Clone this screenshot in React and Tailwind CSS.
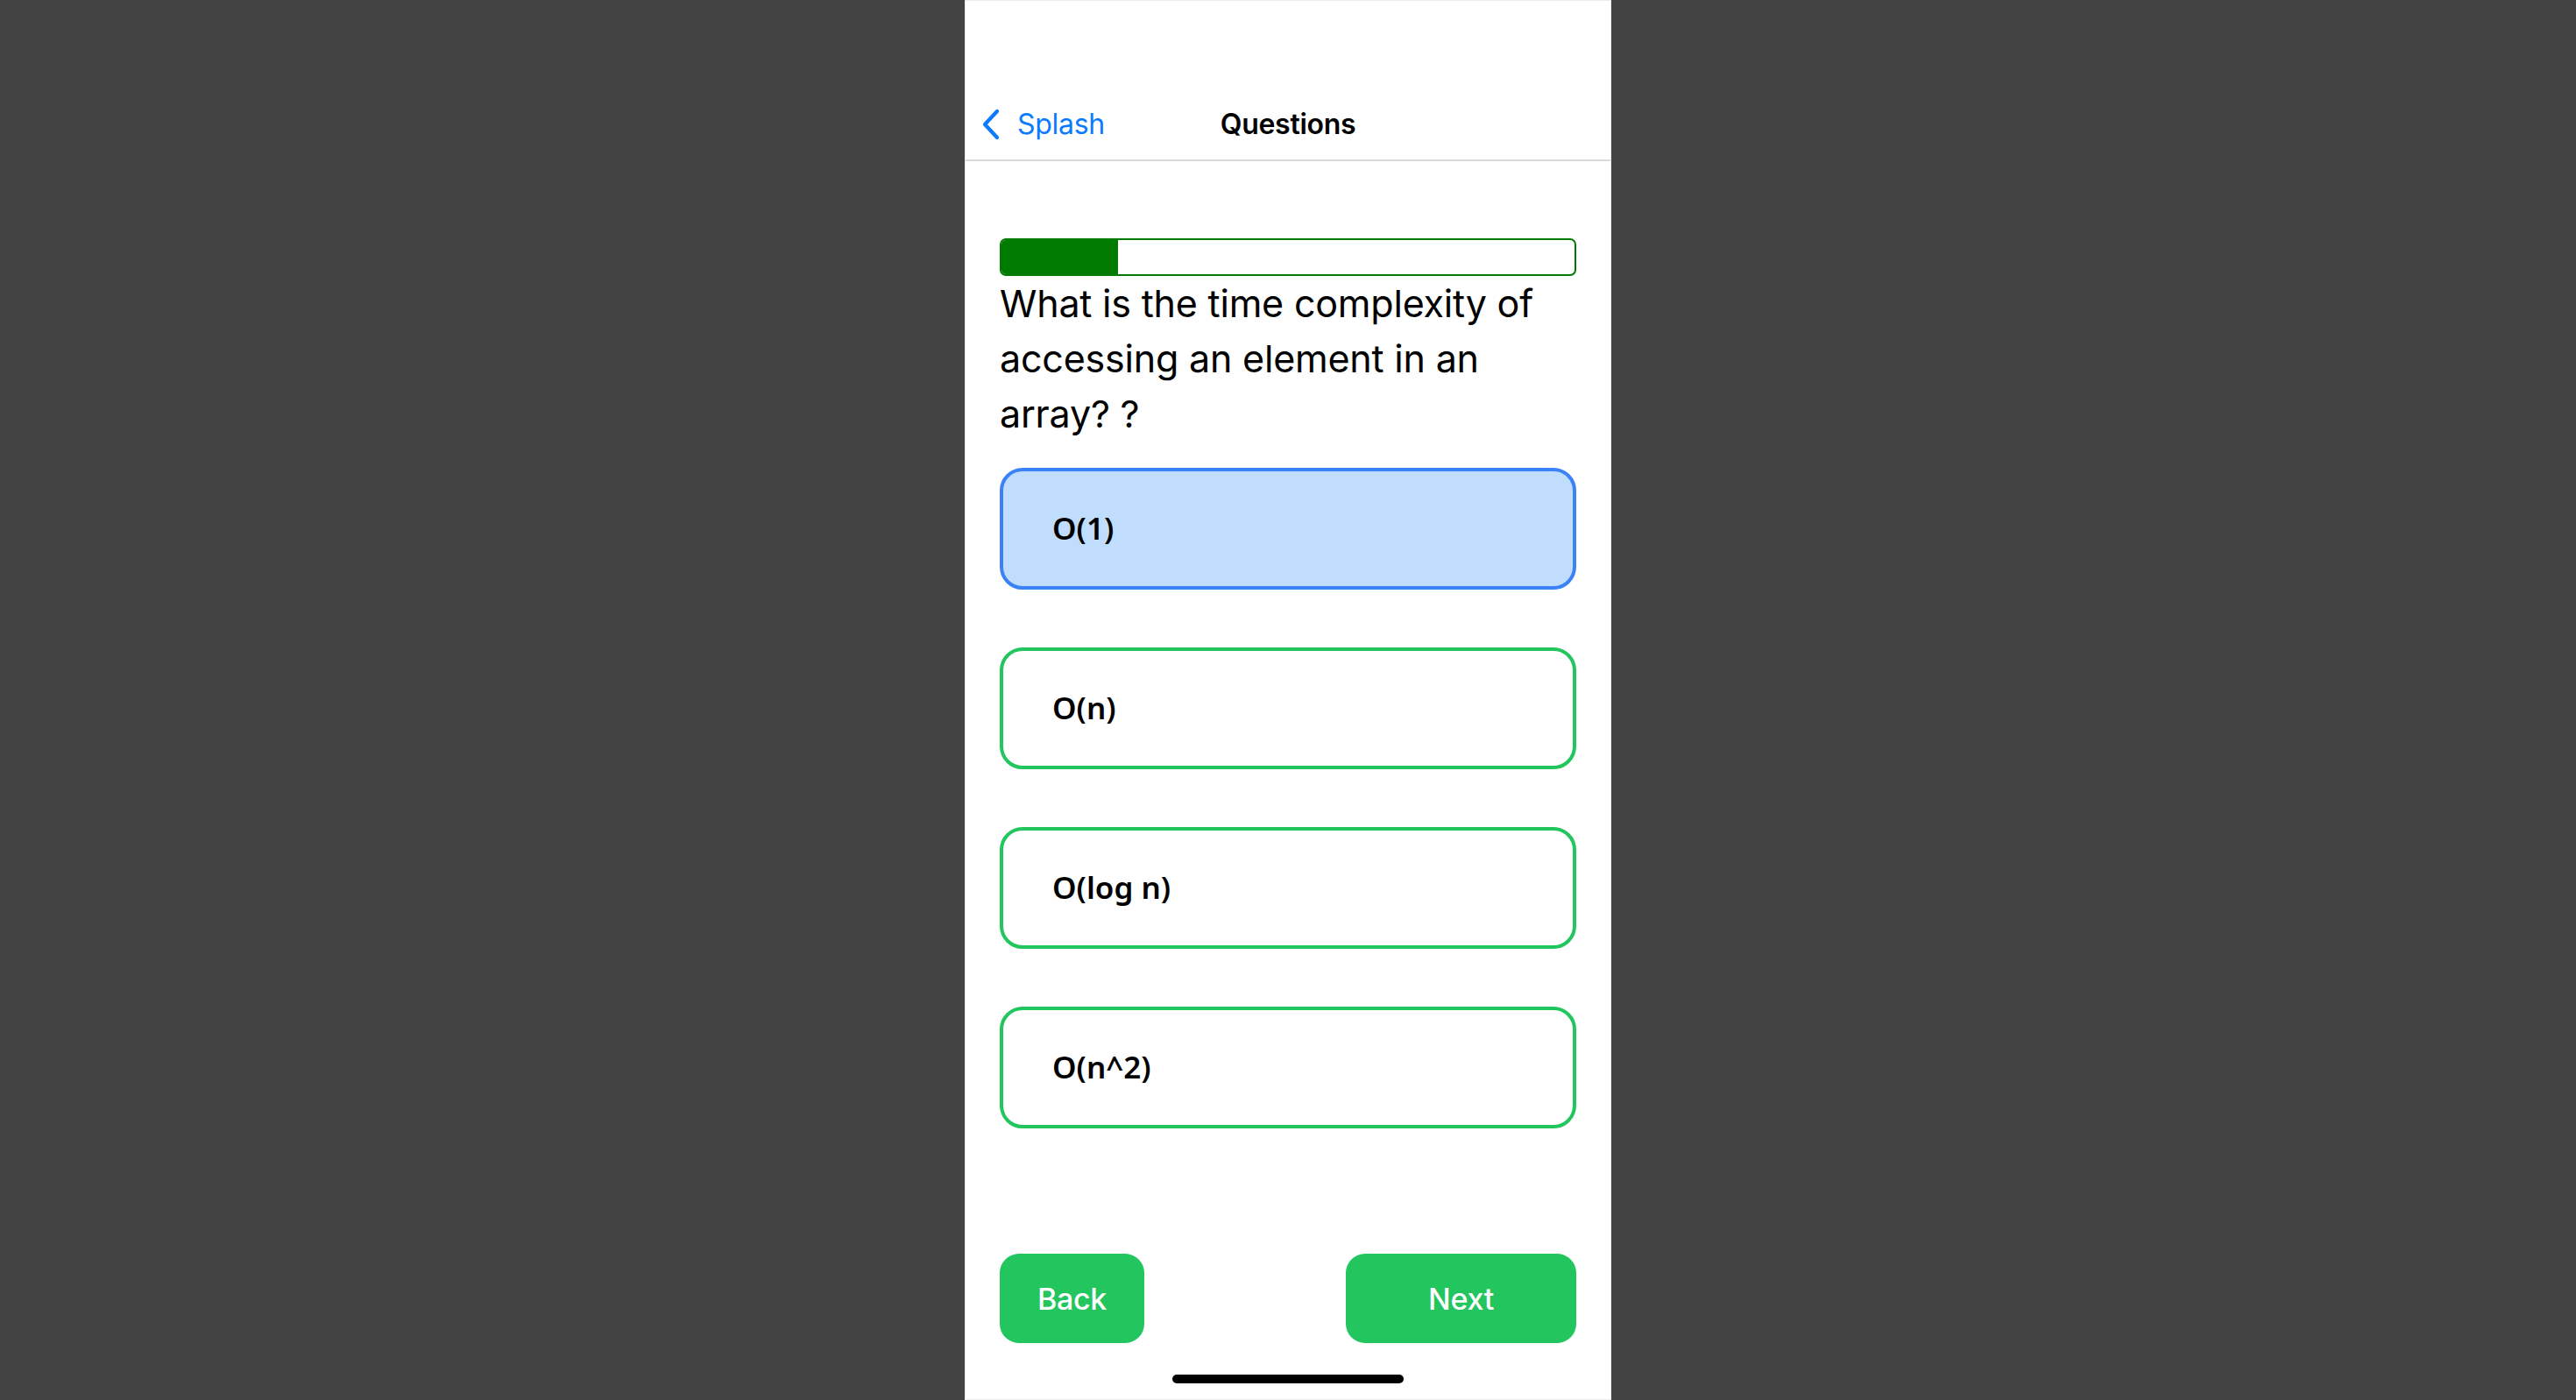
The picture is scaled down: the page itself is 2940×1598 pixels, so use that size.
import React from "react";

const options = ["O(1)", "O(n)", "O(log n)", "O(n^2)"];

export default function App() {
  return (
    <div className="w-full h-[1598px] bg-[#434343] flex justify-center" style={{ fontFamily: "Inter, 'Noto Sans', sans-serif" }}>
      <div className="w-[738px] h-[1598px] bg-white border border-[#ececec] flex flex-col">
        {/* status bar space */}
        <div className="h-[100px]" />
        {/* nav bar */}
        <div className="relative h-[83px] flex items-center justify-center border-b-2 border-[#d9d9d9]">
          <div className="absolute left-[17px] top-0 h-full flex items-center gap-[18px] text-[#0a7aff]">
            <svg width="24" height="36" viewBox="0 0 24 36" fill="none">
              <path d="M19 3 L5 18 L19 33" stroke="#0a7aff" strokeWidth="4.2" strokeLinecap="round" strokeLinejoin="round" />
            </svg>
            <span className="text-[32px] leading-none tracking-[-0.3px]">Splash</span>
          </div>
          <span className="text-[32px] font-semibold leading-none text-black tracking-[-0.3px]">Questions</span>
        </div>
        <div className="px-[39px] pt-[88px] flex flex-col flex-1">
          {/* progress */}
          <div className="h-[43px] w-full rounded-[7px] border-2 border-[#007a00] overflow-hidden flex">
            <div className="w-[133px] h-full bg-[#007a00]" />
          </div>
          {/* question */}
          <div className="text-[43px] leading-[63px] text-black tracking-[-0.2px]">
            What is the time complexity of accessing an element in an array? ?
          </div>
          {/* options */}
          <div className="mt-[30px] flex flex-col gap-[66px]">
            {options.map((o, i) => (
              <div
                key={o}
                className={
                  i === 0
                    ? "h-[139px] rounded-[26px] border-[4px] border-[#3b82f6] bg-[#c1ddfe] flex items-center pl-[56px]"
                    : "h-[139px] rounded-[26px] border-[4px] border-[#22c55e] bg-white flex items-center pl-[56px]"
                }
              >
                <span className="text-[35px] font-semibold text-black" style={{ fontFamily: "'Noto Sans', Inter, sans-serif" }}>{o}</span>
              </div>
            ))}
          </div>
          <div className="flex-1" />
          {/* buttons */}
          <div className="flex justify-between">
            <div className="w-[165px] h-[102px] rounded-[22px] bg-[#22c55e] flex items-center justify-center">
              <span className="text-[34px] font-medium text-white tracking-[-0.3px]">Back</span>
            </div>
            <div className="w-[263px] h-[102px] rounded-[22px] bg-[#22c55e] flex items-center justify-center">
              <span className="text-[34px] font-medium text-white tracking-[-0.3px]">Next</span>
            </div>
          </div>
          <div className="h-[64px] flex justify-center items-start pt-[36px]">
            <div className="w-[264px] h-[10px] rounded-full bg-black" />
          </div>
        </div>
      </div>
    </div>
  );
}
